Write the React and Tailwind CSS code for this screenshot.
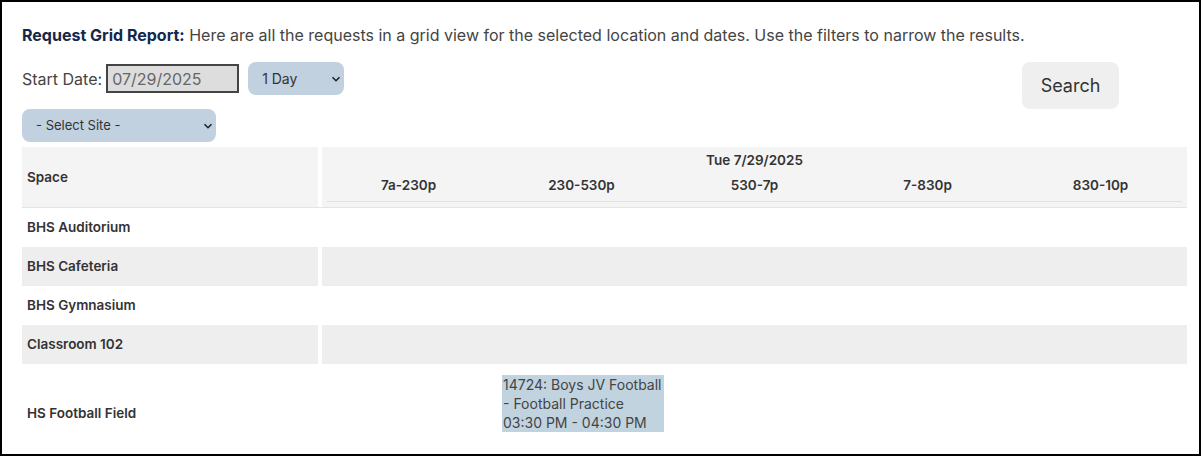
import React from 'react';

const slots = ['7a-230p', '230-530p', '530-7p', '7-830p', '830-10p'];

const spaces = [
    { name: 'BHS Auditorium', shaded: false },
    { name: 'BHS Cafeteria', shaded: true },
    { name: 'BHS Gymnasium', shaded: false },
    { name: 'Classroom 102', shaded: true },
];

function Chevron() {
    return (
        <svg className="pointer-events-none absolute right-[3px] top-1/2 -translate-y-1/2" width="10" height="10" viewBox="0 0 10 10">
            <path d="M1.5 3.2 L5 6.7 L8.5 3.2" fill="none" stroke="#222" strokeWidth="1.6" />
        </svg>
    );
}

export default function App() {
    return (
        <div
            className="w-[1201px] h-[456px] border-2 border-black overflow-hidden bg-white pl-[20px] pt-[23px] text-[#444]"
            style={{ fontFamily: 'Inter, "Noto Sans", sans-serif' }}
        >
            {/* Intro */}
            <p className="text-[16px] leading-[20px]">
                <span className="font-bold text-[#14284b]">Request Grid Report:</span> Here are all the requests in a grid view for the selected location and dates. Use the filters to narrow the results.
            </p>

            {/* Filters */}
            <div className="mt-[17px] flex w-[1097px] items-start justify-between">
                <div className="flex h-[33px] items-center">
                    <span className="text-[16px] text-[#444]">Start Date:</span>
                    <input
                        readOnly
                        value="07/29/2025"
                        className="ml-[4px] h-[29px] w-[133px] border-2 border-[#444] bg-[#dddddd] px-[4px] text-[16px] text-[#666] outline-none"
                    />
                    <div className="relative ml-[9px]">
                        <select className="h-[33px] w-[96px] appearance-none rounded-lg bg-[#c1d1df] pl-[14px] text-[14px] text-[#333] outline-none">
                            <option>1 Day</option>
                        </select>
                        <Chevron />
                    </div>
                </div>
                <button className="h-[47px] w-[97px] rounded-lg bg-[#efefef] text-[18px] text-[#333]">
                    Search
                </button>
            </div>

            <div className="relative w-[194px]">
                <select className="h-[33px] w-[194px] appearance-none rounded-lg bg-[#c1d1df] pl-[14px] text-[13px] text-[#333] outline-none">
                    <option>- Select Site -</option>
                </select>
                <Chevron />
            </div>

            {/* Grid */}
            <div className="mt-[5px] w-[1165px] text-[13.5px] text-[#333]">
                <div className="grid grid-cols-[296px_1fr] gap-x-[4px] border-b border-[#e4e4e4]">
                    <div className="flex h-[60px] items-center bg-[#f4f4f4] pl-[5px] font-semibold">Space</div>
                    <div className="flex h-[60px] flex-col bg-[#f4f4f4] pt-[4px]">
                        <div className="h-[18px] text-center font-semibold leading-[18px]">Tue 7/29/2025</div>
                        <div className="mt-[7px] grid h-[18px] grid-cols-5 font-semibold leading-[18px]">
                            {slots.map(s => (
                                <div key={s} className="text-center">{s}</div>
                            ))}
                        </div>
                        <div className="mx-[5px] mt-[7px] h-px bg-[#e2e2e2]" />
                    </div>
                </div>

                {spaces.map(row => (
                    <div key={row.name} className="grid h-[39px] grid-cols-[296px_1fr] gap-x-[4px]">
                        <div className={`flex items-center pl-[5px] font-semibold ${row.shaded ? 'bg-[#eeeeee]' : ''}`}>{row.name}</div>
                        <div className={row.shaded ? 'bg-[#eeeeee]' : ''} />
                    </div>
                ))}

                <div className="grid h-[98px] grid-cols-[296px_1fr] gap-x-[4px]">
                    <div className="flex items-center pl-[5px] font-semibold">HS Football Field</div>
                    <div className="grid grid-cols-5 pt-[11px]">
                        <div />
                        <div className="pl-[7px]">
                            <div className="w-[162px] bg-[#c2d3e0] px-[1px] text-[14px] leading-[19px] text-[#444]">
                                <div>14724: Boys JV Football</div>
                                <div>- Football Practice</div>
                                <div>03:30 PM - 04:30 PM</div>
                            </div>
                        </div>
                    </div>
                </div>
            </div>
        </div>
    );
}
